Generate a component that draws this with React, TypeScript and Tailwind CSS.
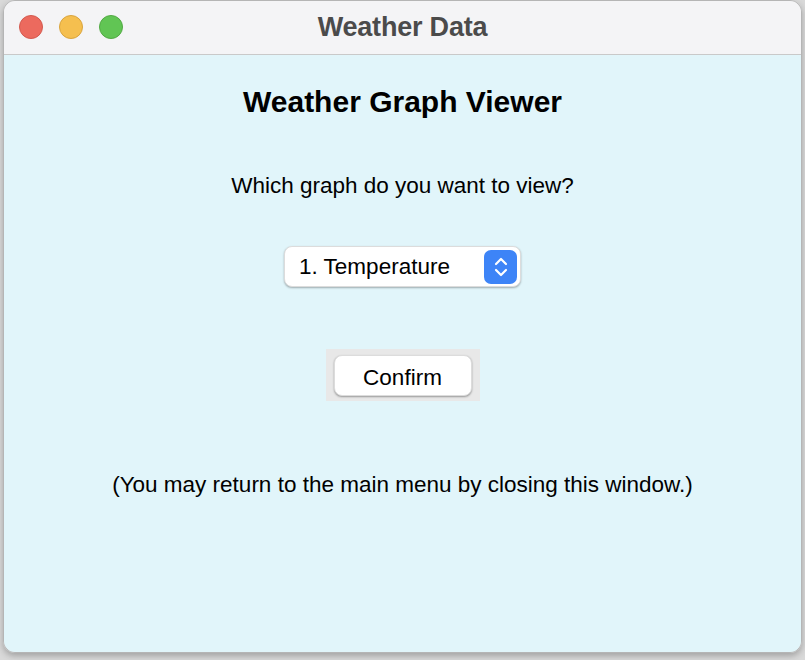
import { useState } from 'react';

export default function App() {
  const [graph, setGraph] = useState('1. Temperature');

  return (
    <div className="w-[805px] h-[660px] bg-[#d9d9d9] overflow-hidden" style={{ fontFamily: '"Liberation Sans", Arial, sans-serif' }}>
      <div className="ml-[3px] w-[799px] h-[653px] rounded-[12px] overflow-hidden flex flex-col border border-[#b5b5b5] shadow-[0_3px_6px_rgba(0,0,0,0.25)]">
        {/* Title bar */}
        <div className="relative h-[54px] shrink-0 bg-[#f4f4f6] border-b border-[#c9c9c9] flex items-center justify-center">
          <div className="absolute left-[15px] top-[14px] flex gap-[16px]">
            <span className="w-[24px] h-[24px] rounded-full bg-[#ec6a5e] border border-[#d35a4f]" />
            <span className="w-[24px] h-[24px] rounded-full bg-[#f5bf4f] border border-[#d9a43e]" />
            <span className="w-[24px] h-[24px] rounded-full bg-[#61c554] border border-[#52a944]" />
          </div>
          <span className="text-[27px] font-bold text-[#4b4b4b] tracking-[-0.2px]">Weather Data</span>
        </div>

        {/* Body */}
        <div className="flex-1 bg-[#e1f5fa] flex flex-col items-center">
          <h1 className="mt-[31px] text-[30px] leading-[32px] font-bold text-black">Weather Graph Viewer</h1>
          <p className="mt-[55px] text-[22.5px] leading-[26px] text-black">Which graph do you want to view?</p>

          <div className="mt-[47px] w-[237px] h-[41px] bg-white rounded-[8px] shadow-[0_1px_2px_rgba(0,0,0,0.3)] border border-[#dcdcdc] flex items-center pl-[14px] pr-[3px]">
            <span className="flex-1 text-[22.5px] text-black">{graph}</span>
            <button
              onClick={() => setGraph(graph)}
              className="w-[33px] h-[34px] rounded-[7px] bg-[#3d84f7] flex items-center justify-center"
            >
              <svg width="16" height="24" viewBox="0 0 16 24" fill="none" stroke="white" strokeWidth="2.2" strokeLinecap="round" strokeLinejoin="round">
                <path d="M3 9 L8 4 L13 9" />
                <path d="M3 15 L8 20 L13 15" />
              </svg>
            </button>
          </div>

          <div className="mt-[62px] w-[154px] h-[52px] bg-[#e8e8e8] flex items-center justify-center">
            <button className="w-[138px] h-[41px] pt-[5px] bg-white rounded-[8px] shadow-[0_1px_2px_rgba(0,0,0,0.35)] border border-[#dcdcdc] text-[22.5px] text-black">
              Confirm
            </button>
          </div>

          <p className="mt-[71px] text-[22.5px] leading-[26px] text-black">(You may return to the main menu by closing this window.)</p>
        </div>
      </div>
    </div>
  );
}
